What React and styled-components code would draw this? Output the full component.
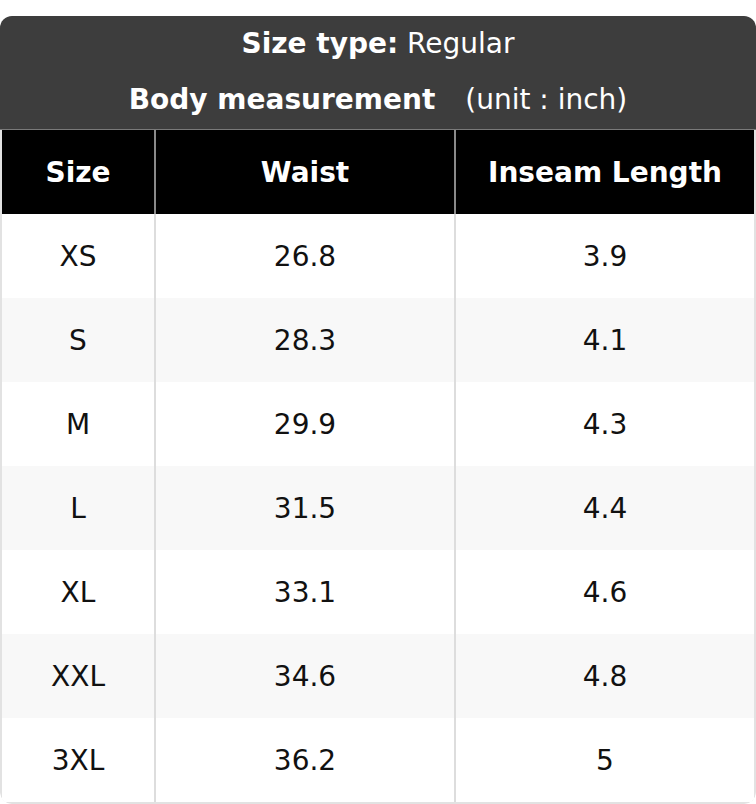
import React from "react";
import styled, { createGlobalStyle } from "styled-components";

const Global = createGlobalStyle`
  html, body { margin: 0; padding: 0; background: #ffffff; }
  body { font-family: "DejaVu Sans", "Liberation Sans", sans-serif; }
`;

const Page = styled.div`
  padding-top: 16px;
`;

const Card = styled.div`
  width: 756px;
  border-radius: 12px;
  overflow: hidden;
  background: #ffffff;
`;

const Caption = styled.div`
  background: #3d3d3d;
  color: #ffffff;
  padding: 1px 0 2px;
  text-align: center;
  font-size: 28px;
  border-bottom: 1px solid #7a7a7a;
`;

const CaptionLine = styled.div`
  line-height: 54px;
  white-space: pre;
  padding-top: ${(p) => p.$shift || 0}px;
`;

const Strong = styled.b`
  font-weight: 700;
`;

const Unit = styled.span`
  margin-left: ${(p) => p.$gap}px;
`;

const Grid = styled.div`
  display: grid;
  grid-template-columns: 152px 300px 300px;
  border: 2px solid #e2e2e2;
  border-top: none;
  border-radius: 0 0 12px 12px;
`;

const HeadCell = styled.div`
  height: 84px;
  background: #000000;
  color: #ffffff;
  font-weight: 700;
  font-size: 28px;
  display: flex;
  align-items: center;
  justify-content: center;
  border-left: ${(p) => (p.$first ? "none" : "2px solid #8a8a8a")};
`;

const Cell = styled.div`
  height: 84px;
  background: ${(p) => (p.$alt ? "#f8f8f8" : "#ffffff")};
  color: #111111;
  font-size: 28px;
  display: flex;
  align-items: center;
  justify-content: center;
  border-left: ${(p) => (p.$first ? "none" : "2px solid #dddddd")};
`;

const rows = [
  ["XS", "26.8", "3.9"],
  ["S", "28.3", "4.1"],
  ["M", "29.9", "4.3"],
  ["L", "31.5", "4.4"],
  ["XL", "33.1", "4.6"],
  ["XXL", "34.6", "4.8"],
  ["3XL", "36.2", "5"],
];

export default function App() {
  return (
    <Page>
      <Global />
      <Card>
        <Caption>
          <CaptionLine>
            <Strong>Size type:</Strong> Regular
          </CaptionLine>
          <CaptionLine $shift={2}>
            <Strong>Body measurement</Strong>
            <Unit $gap={30}>(unit : inch)</Unit>
          </CaptionLine>
        </Caption>
        <Grid>
          <HeadCell $first>Size</HeadCell>
          <HeadCell>Waist</HeadCell>
          <HeadCell>Inseam Length</HeadCell>
          {rows.map((r, i) =>
            r.map((v, j) => (
              <Cell key={`${i}-${j}`} $first={j === 0} $alt={i % 2 === 1}>
                {v}
              </Cell>
            ))
          )}
        </Grid>
      </Card>
    </Page>
  );
}
